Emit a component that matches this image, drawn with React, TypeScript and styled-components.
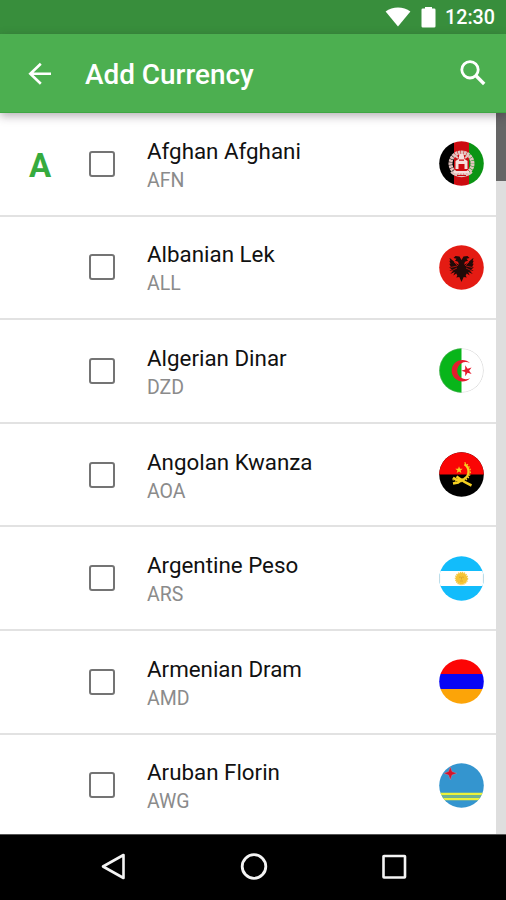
import React from 'react';
import styled, { createGlobalStyle } from 'styled-components';

const GlobalStyle = createGlobalStyle`
  * { box-sizing: border-box; }
  body { margin: 0; background: #fff; font-family: Roboto, "Liberation Sans", sans-serif; }
`;

const Screen = styled.div`
  width: 506px;
  height: 900px;
  display: flex;
  flex-direction: column;
  overflow: hidden;
  background: #fff;
`;

const StatusBar = styled.div`
  height: 34px;
  flex: none;
  display: flex;
  align-items: center;
  justify-content: flex-end;
  padding-right: 11px;
  background: #388e3c;
  color: #fff;
`;

const WifiIcon = styled.svg`
  width: 26px;
  height: 20px;
  margin-right: 10px;
`;

const BatteryIcon = styled.svg`
  width: 15px;
  height: 21px;
  margin-right: 9px;
`;

const Clock = styled.span`
  font-size: 19.7px;
  font-weight: 500;
  line-height: 34px;
  padding-top: 2px;
`;

const AppBar = styled.header`
  height: 79px;
  flex: none;
  display: flex;
  align-items: center;
  padding: 0 17px 0 24px;
  background: #4caf50;
  border-bottom: 1px solid #3fa644;
  color: #fff;
  position: relative;
  box-shadow: 0 3px 9px rgba(40, 20, 40, 0.34);
  z-index: 1;
`;

const Title = styled.h1`
  margin: 4px auto 0 29px;
  font-size: 27.9px;
  font-weight: 500;
  line-height: 36px;
`;

const Glyph = styled.svg`
  width: 32px;
  height: 32px;
  flex: none;
  display: block;
`;

const Content = styled.main`
  height: 720.5px;
  flex: none;
  display: flex;
`;

const List = styled.ul`
  flex: 1;
  margin: 0;
  padding: 0;
  list-style: none;
  overflow: hidden;
`;

const Row = styled.li`
  height: 103.6px;
  display: grid;
  grid-template-columns: 88.5px 58.5px 1fr 45px;
  align-items: center;
  padding-right: 12px;
  border-bottom: 2px solid #e2e2e2;
`;

const Letter = styled.span`
  padding: 4px 0 0 29px;
  font-size: 33px;
  font-weight: 700;
  line-height: 38px;
  color: #36ab3e;
`;

const Checkbox = styled.span`
  width: 26px;
  height: 26px;
  border: 2.4px solid #747474;
  border-radius: 3px;
`;

const Labels = styled.div`
  display: flex;
  flex-direction: column;
  padding-top: 4px;
`;

const Name = styled.span`
  font-size: 22.35px;
  line-height: 29px;
  color: #111;
`;

const Code = styled.span`
  font-size: 19.5px;
  line-height: 29px;
  color: #8b8b8b;
`;

const FlagIcon = styled.svg`
  width: 45px;
  height: 45px;
  display: block;
`;

const Scrollbar = styled.div`
  width: 10px;
  background: #dedede;
`;

const Thumb = styled.div`
  height: 68px;
  background: #666;
`;

const NavBar = styled.nav`
  flex: 1;
  display: flex;
  justify-content: space-between;
  padding: 16.5px 96px 0 97px;
  background: #000;
  border-top: 1px solid #555;
`;

type FlagKind = 'af' | 'al' | 'dz' | 'ao' | 'ar' | 'am' | 'aw';

const art: Record<FlagKind, React.ReactNode> = {
  af: (
    <>
      <path fill="#000" d="M0 0h15v45H0z" />
      <path fill="#cc0b10" d="M15 0h15v45H15z" />
      <path fill="#0b9414" d="M30 0h15v45H30z" />
      <g fill="none" stroke="#e3c4c0">
        <circle cx="22.5" cy="22.5" r="11" strokeWidth="4" strokeDasharray="2.5 .5" />
        <path strokeWidth="2" d="M12 31c6 5.500 15 5.500 21 0M15 14l4 3m11-3-4 3" />
      </g>
      <path fill="#f6dfdc" d="M16.500 28v-8l3-2 1-5h4l1 5 3 2v8h-3v-5h-6v5zM15 30h15v2.500H15z" />
      <path fill="#cc0b10" d="M20 18.500h5v1.200h-5zM20.500 23.500h4v3h-4zM18 34h9v1h-9z" />
    </>
  ),
  al: (
    <>
      <path fill="#e41b13" d="M0 0h45v45H0z" />
      <path
        fill="#210a08"
        d="M22.500 15l-2-3.500-4-.5-2 2 3 .8-1.500 2 3 1 1 3-3-1.500-6.500-5.500.8 3.200-1-.2 1.200 3-1.200 0 1.500 3-1.500.6 2.500 2-2.500 1.500 4-.3-3 3.500 4.500-2-1.500 3.500 3-2 1 2-1 2 3-.6 2.200 5 2.200-5 3 .6-1-2 1-2 3 2-1.500-3.500 4.500 2-3-3.500 4 .3-2.500-1.500 2.500-2-1.500-.6 1.500-3h-1.200l1.200-3-1 .2.800-3.200-6.500 5.500-3 1.500 1-3 3-1-1.500-2 3-.8-2-2-4 .5z"
      />
      <path stroke="#b5160f" strokeWidth=".9" d="M11.500 22.500l6.500-1.500m-6 5 6-3m15.500-.5-6.500-1.500m6 5-6-3M15 17l4 4m11-4-4 4" />
    </>
  ),
  dz: (
    <>
      <path fill="#fff" d="M0 0h45v45H0z" />
      <path fill="#08b51a" d="M0 0h22.500v45H0z" />
      <path fill="#e51b2d" d="M31 15.200A10.700 10.700 0 1 0 31 30.200 8.600 8.600 0 1 1 31 15.200z" />
      <path
        fill="#e51b2d"
        d="M22.200 22.800l4-1.300v-4.200l2.400 3.400 4-1.300-2.500 3.400 2.500 3.300-4-1.300-2.400 3.400v-4.100z"
      />
      <circle cx="22.500" cy="22.500" r="22" fill="none" stroke="#aaa" strokeOpacity=".5" strokeWidth=".8" />
    </>
  ),
  ao: (
    <>
      <path fill="#000" d="M0 0h45v45H0z" />
      <path fill="#fa0505" d="M0 0h45v22.500H0z" />
      <g fill="none" stroke="#f5d021">
        <path strokeWidth="2.400" d="M25.500 12.300c5.500 3.500 5.500 11.500-.5 14.700-4 2-8 1.200-11-1.200" />
        <path strokeWidth="1.200" strokeDasharray="1.500 1.300" d="M25.500 10.600c8 4 7.500 14 .5 17.700-4.500 2.300-9 1.500-12.500-.7" />
        <path strokeWidth="2.600" d="M17.500 24.500c3 2 7 5.500 15 9M14 31.500l5-1 4-3" />
      </g>
      <path fill="#f5d021" d="M20 14.200l1 2.500 2.700.1-2.100 1.700.8 2.600-2.400-1.500-2.300 1.500.8-2.600-2.200-1.700 2.800-.1z" />
    </>
  ),
  ar: (
    <>
      <path fill="#12bcfb" d="M0 0h45v45H0z" />
      <path fill="#fff" d="M0 15h45v15H0z" />
      <circle cx="22.500" cy="22.500" r="5.800" fill="#f6c535" />
      <circle cx="22.500" cy="22.500" r="6" fill="none" stroke="#f3c849" strokeWidth="1.400" strokeDasharray="1.300 .7" />
      <path fill="none" stroke="#d9a32f" strokeWidth=".8" d="M20 21.300l2-.3m1 0 2 .3M21 25h3m-1.500-4v2.500" />
      <path stroke="#999" strokeOpacity=".4" d="M.6 18v9M44.400 18v9" />
    </>
  ),
  am: (
    <>
      <path fill="#fc0505" d="M0 0h45v15H0z" />
      <path fill="#0806f5" d="M0 15h45v15H0z" />
      <path fill="#fca408" d="M0 30h45v15H0z" />
    </>
  ),
  aw: (
    <>
      <path fill="#3495cf" d="M0 0h45v45H0z" />
      <path fill="#ecf23a" d="M0 29.800h45v2.400H0zM0 34.800h45v2.400H0z" />
      <path fill="#72b58f" d="M0 32.200h45v2.600H0z" />
      <path
        fill="#d4142b"
        stroke="#d9a1b4"
        strokeWidth=".3"
        d="M11.300 3.800l1.700 4.800 4.800 1.700-4.800 1.700-1.700 4.800-1.700-4.800-4.800-1.700 4.800-1.700z"
      />
    </>
  ),
};

const Flag = ({ kind }: { kind: FlagKind }) => (
  <FlagIcon viewBox="0 0 45 45" aria-hidden="true">
    <defs>
      <clipPath id={`round-${kind}`}>
        <circle cx="22.500" cy="22.500" r="22.300" />
      </clipPath>
    </defs>
    <g clipPath={`url(#round-${kind})`}>{art[kind]}</g>
  </FlagIcon>
);

const currencies: { name: string; code: string; flag: FlagKind; letter?: string }[] = [
  { name: 'Afghan Afghani', code: 'AFN', flag: 'af', letter: 'A' },
  { name: 'Albanian Lek', code: 'ALL', flag: 'al' },
  { name: 'Algerian Dinar', code: 'DZD', flag: 'dz' },
  { name: 'Angolan Kwanza', code: 'AOA', flag: 'ao' },
  { name: 'Argentine Peso', code: 'ARS', flag: 'ar' },
  { name: 'Armenian Dram', code: 'AMD', flag: 'am' },
  { name: 'Aruban Florin', code: 'AWG', flag: 'aw' },
];

export default function App() {
  return (
    <>
      <GlobalStyle />
      <Screen>
        <StatusBar>
          <WifiIcon viewBox="0 0 26 20">
            <path fill="#fff" d="M13 19.500L.6 4.600C7.500-.9 18.500-.9 25.400 4.600z" />
          </WifiIcon>
          <BatteryIcon viewBox="0 0 15 21">
            <path fill="#fff" d="M4 0h7v1.500h2.200a1.300 1.300 0 0 1 1.300 1.300v16.400a1.300 1.300 0 0 1-1.300 1.300H1.800a1.300 1.300 0 0 1-1.300-1.300V2.800A1.300 1.300 0 0 1 1.800 1.500H4z" />
          </BatteryIcon>
          <Clock>12:30</Clock>
        </StatusBar>
        <AppBar>
          <Glyph viewBox="0 0 32 32">
            <path fill="none" stroke="#fff" strokeWidth="2.600" d="M27 16.700H6.500M16.800 6.700L6.300 16.700 16.800 26.700" />
          </Glyph>
          <Title>Add Currency</Title>
          <Glyph viewBox="0 0 32 32">
            <circle cx="13" cy="12.800" r="8.200" fill="none" stroke="#fff" strokeWidth="2.800" />
            <path stroke="#fff" strokeWidth="3.400" d="M18.500 18.300l8.700 8.700" />
          </Glyph>
        </AppBar>
        <Content>
          <List>
            {currencies.map((c) => (
              <Row key={c.code}>
                <Letter>{c.letter}</Letter>
                <Checkbox />
                <Labels>
                  <Name>{c.name}</Name>
                  <Code>{c.code}</Code>
                </Labels>
                <Flag kind={c.flag} />
              </Row>
            ))}
          </List>
          <Scrollbar>
            <Thumb />
          </Scrollbar>
        </Content>
        <NavBar>
          <Glyph viewBox="0 0 32 32">
            <path fill="none" stroke="#f4f4f4" strokeWidth="2.600" strokeLinejoin="round" d="M26.500 4v23L6 15.500z" />
          </Glyph>
          <Glyph viewBox="0 0 32 32">
            <circle cx="16" cy="15.500" r="11.800" fill="none" stroke="#f4f4f4" strokeWidth="2.800" />
          </Glyph>
          <Glyph viewBox="0 0 32 32">
            <rect x="5.500" y="5" width="21.500" height="21.500" rx=".5" fill="none" stroke="#f4f4f4" strokeWidth="2.600" />
          </Glyph>
        </NavBar>
      </Screen>
    </>
  );
}
